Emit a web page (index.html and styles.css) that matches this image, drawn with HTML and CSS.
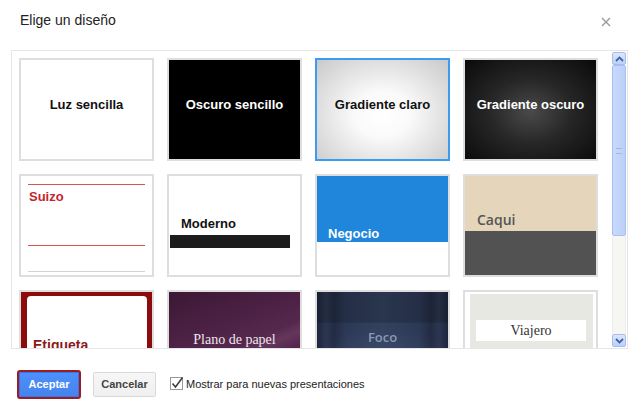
FILE: index.html
```html
<!DOCTYPE html>
<html lang="es">
<head>
<meta charset="utf-8">
<title>Elige un diseño</title>
<link rel="stylesheet" href="styles.css">
</head>
<body>
<div class="dialog">
  <div class="header">
    <div class="title">Elige un diseño</div>
    <div class="close" aria-label="Cerrar">
      <svg width="10" height="10" viewBox="0 0 10 10"><path d="M1 1L9 9M9 1L1 9" stroke="#9a9a9a" stroke-width="1.4" fill="none"/></svg>
    </div>
  </div>

  <div class="scrollbox">
    <div class="content">
      <div class="grid">
        <div class="thumb t-light"><span class="ctext">Luz sencilla</span></div>
        <div class="thumb t-dark"><span class="ctext">Oscuro sencillo</span></div>
        <div class="thumb t-glight selected"><span class="ctext">Gradiente claro</span></div>
        <div class="thumb t-gdark"><span class="ctext">Gradiente oscuro</span></div>

        <div class="thumb t-suizo">
          <div class="sz-line"></div>
          <div class="sz-title">Suizo</div>
          <div class="sz-line sz-line2"></div>
          <div class="sz-gray"></div>
        </div>
        <div class="thumb t-moderno">
          <div class="mo-title">Moderno</div>
          <div class="mo-bar"></div>
        </div>
        <div class="thumb t-negocio">
          <div class="ne-top"><span class="ne-title">Negocio</span></div>
        </div>
        <div class="thumb t-caqui">
          <div class="ca-top"><span class="ca-title">Caqui</span></div>
          <div class="ca-bottom"></div>
        </div>

        <div class="thumb t-etiqueta">
          <div class="et-inner"><span class="et-title">Etiqueta</span></div>
        </div>
        <div class="thumb t-papel"><span class="pa-title">Plano de papel</span></div>
        <div class="thumb t-foco"><span class="fo-title">Foco</span></div>
        <div class="thumb t-viajero">
          <div class="vi-box"><div class="vi-band">Viajero</div></div>
        </div>
      </div>
    </div>
    <div class="scrollbar">
      <div class="sb-btn sb-up">
        <svg width="9" height="6" viewBox="0 0 9 6"><path d="M1 5L4.5 1.5L8 5" stroke="#3f64a8" stroke-width="1.8" fill="none"/></svg>
      </div>
      <div class="sb-thumb"><span class="grip"></span></div>
      <div class="sb-track"></div>
      <div class="sb-btn sb-down">
        <svg width="9" height="6" viewBox="0 0 9 6"><path d="M1 1L4.5 4.5L8 1" stroke="#3f64a8" stroke-width="1.8" fill="none"/></svg>
      </div>
    </div>
  </div>

  <div class="footer">
    <button class="btn btn-primary">Aceptar</button>
    <button class="btn btn-default">Cancelar</button>
    <label class="check">
      <svg class="cbox" width="14" height="14" viewBox="0 0 14 14"><rect x="0.5" y="1.5" width="12" height="12" fill="#fff" stroke="#9a9a9a"/><path d="M2.5 7.5L5.5 11L12.5 1.5" stroke="#3a3a3a" stroke-width="1.5" fill="none"/></svg>
      <span>Mostrar para nuevas presentaciones</span>
    </label>
  </div>
</div>
</body>
</html>
```
FILE: styles.css
```css
* { box-sizing: border-box; }
html, body { margin: 0; padding: 0; background: #fff; }
body { font-family: "Liberation Sans", Arial, sans-serif; color: #222; }

.dialog { width: 634px; height: 400px; background: #fff; overflow: hidden; }

.header {
  height: 50px;
  display: flex;
  justify-content: space-between;
  align-items: flex-start;
  padding: 12px 23px 0 20px;
}
.title { font-size: 14px; line-height: 17px; color: #222; }
.close { width: 10px; height: 10px; margin-top: 5px; display: flex; }

.scrollbox {
  margin-left: 11px;
  width: 617px;
  height: 299px;
  border: 1px solid #e6e6e6;
  display: flex;
}
.content { width: 600px; height: 297px; overflow: hidden; }
.grid {
  display: grid;
  grid-template-columns: repeat(4, 135px);
  grid-auto-rows: 103px;
  column-gap: 13px;
  row-gap: 13px;
  padding: 7px 0 0 7px;
}
.thumb {
  width: 135px;
  height: 103px;
  border: 2px solid #dedede;
  background: #fff;
  overflow: hidden;
  font-weight: bold;
  font-size: 13px;
}
.thumb.selected { border-color: #3d9cf2; }

.ctext { display: block; text-align: center; line-height: 15px; padding-top: 37px; }
.t-light { color: #111; }
.t-dark { background: #000; color: #fff; }
.t-glight { background: radial-gradient(ellipse at 50% 55%, #ffffff 0%, #fafafa 30%, #c9c9c9 100%); color: #111; }
.t-gdark { background: radial-gradient(ellipse at 50% 52%, #4a4a4a 0%, #262626 45%, #0a0a0a 100%); color: #fff; }

/* Suizo */
.t-suizo { display: flex; flex-direction: column; }
.sz-line { height: 1px; background: #d9534f; margin: 8px 7px 0 7px; }
.sz-title { color: #c1272d; line-height: 15px; margin: 4px 0 0 8px; }
.sz-line2 { margin-top: 41px; }
.sz-gray { height: 1px; background: #d3d3d3; margin: 25px 7px 0 7px; }

/* Moderno */
.t-moderno { display: flex; flex-direction: column; }
.mo-title { color: #111; line-height: 15px; margin: 40px 0 0 12px; }
.mo-bar { height: 13px; width: 120px; background: #1c1c1c; margin: 4px 0 0 1px; }

/* Negocio */
.ne-top { height: 66px; background: #2086dc; padding: 50px 0 0 11px; }
.ne-title { color: #fff; line-height: 15px; display: block; }

/* Caqui */
.t-caqui { display: flex; flex-direction: column; }
.ca-top { height: 55px; background: #e4d5bb; padding: 36px 0 0 12px; }
.ca-title { font-family: "Open Sans", "Liberation Sans", sans-serif; font-weight: 600; font-size: 14px; line-height: 16px; color: #555; display: block; }
.ca-bottom { flex: 1; background: #525252; }

/* Etiqueta */
.t-etiqueta { background: #8b0c0c; padding: 4px 5px 0 6px; }
.et-inner { background: #fff; height: 100%; border-radius: 4px 4px 0 0; padding: 41px 0 0 6px; }
.et-title { color: #8b1a1a; font-size: 14px; line-height: 16px; display: block; }

/* Papel */
.t-papel {
  background:
    linear-gradient(155deg, rgba(255,255,255,0) 55%, rgba(255,255,255,0.06) 62%, rgba(255,255,255,0) 70%),
    linear-gradient(160deg, #3b1834 0%, #4f2347 40%, #5a2a52 60%, #43203e 100%);
  text-align: center;
}
.pa-title { display: block; font-family: "Liberation Serif", "Times New Roman", serif; font-weight: normal; font-size: 14px; line-height: 16px; color: #f0e6ee; padding-top: 40px; }

/* Foco */
.t-foco {
  background:
    radial-gradient(ellipse 60% 50% at 50% 85%, rgba(90,110,150,0.4), rgba(90,110,150,0) 100%),
    linear-gradient(180deg, rgba(0,0,0,0.18) 0%, rgba(0,0,0,0.18) 30%, rgba(0,0,0,0) 32%),
    linear-gradient(90deg, #1d263c 0%, #2b3752 7%, #222b42 13%, #2c3956 22%, #33415f 50%, #2c3956 78%, #222b42 87%, #2b3752 93%, #1d263c 100%);
  text-align: center;
}
.fo-title { display: block; font-family: "Open Sans", "Liberation Sans", sans-serif; font-weight: 600; font-size: 13px; line-height: 16px; color: #8b9ab3; padding-top: 37px; }

/* Viajero */
.t-viajero { padding: 2px 3px 0 5px; }
.vi-box { background: #e8e8e2; height: 100%; padding: 26px 7px 0 6px; }
.vi-band {
  background: #fff;
  height: 21px;
  text-align: center;
  font-family: "Liberation Serif", "Times New Roman", serif;
  font-weight: normal;
  font-size: 14px;
  line-height: 21px;
  color: #333;
}

/* Scrollbar */
.scrollbar {
  width: 14px;
  margin-right: 1px;
  display: flex;
  flex-direction: column;
  padding: 1px 0;
}
.sb-btn {
  height: 13px;
  background: linear-gradient(#dbe6fc, #bcd0f7);
  border: 1px solid #a6bdee;
  border-radius: 2px;
  display: flex;
  align-items: center;
  justify-content: center;
}
.sb-thumb {
  height: 171px;
  background: linear-gradient(90deg, #c8d9fb, #bcd0f8);
  border: 1px solid #a7bff2;
  border-radius: 2px;
  display: flex;
  align-items: center;
  justify-content: center;
}
.grip { width: 6px; height: 6px; border-top: 1px solid #9fb6e6; border-bottom: 1px solid #9fb6e6; }
.sb-track { flex: 1; background: #f6f6f2; border-left: 1px solid #ececec; border-right: 1px solid #ececec; }

/* Footer */
.footer {
  display: flex;
  align-items: center;
  padding: 19px 0 0 17px;
  height: 51px;
}
.btn {
  font-family: "Liberation Sans", Arial, sans-serif;
  font-size: 11px;
  font-weight: bold;
  padding: 0;
  cursor: default;
}
.btn-primary {
  width: 64px;
  height: 29px;
  border: 2px solid #9e1b1f;
  border-radius: 3px;
  background: linear-gradient(#4d90fe, #4583ec);
  box-shadow: inset 0 0 0 1px #3079ed;
  color: #fff;
}
.btn-default {
  width: 63px;
  height: 25px;
  margin-left: 12px;
  border: 1px solid #d9d9d9;
  border-radius: 2px;
  background: linear-gradient(#f6f6f6, #f0f0f0);
  color: #444;
}
.check {
  display: flex;
  align-items: center;
  margin-left: 14px;
  font-size: 11px;
  color: #222;
}
.cbox { display: block; margin-right: 2px; margin-top: -2px; }
```
